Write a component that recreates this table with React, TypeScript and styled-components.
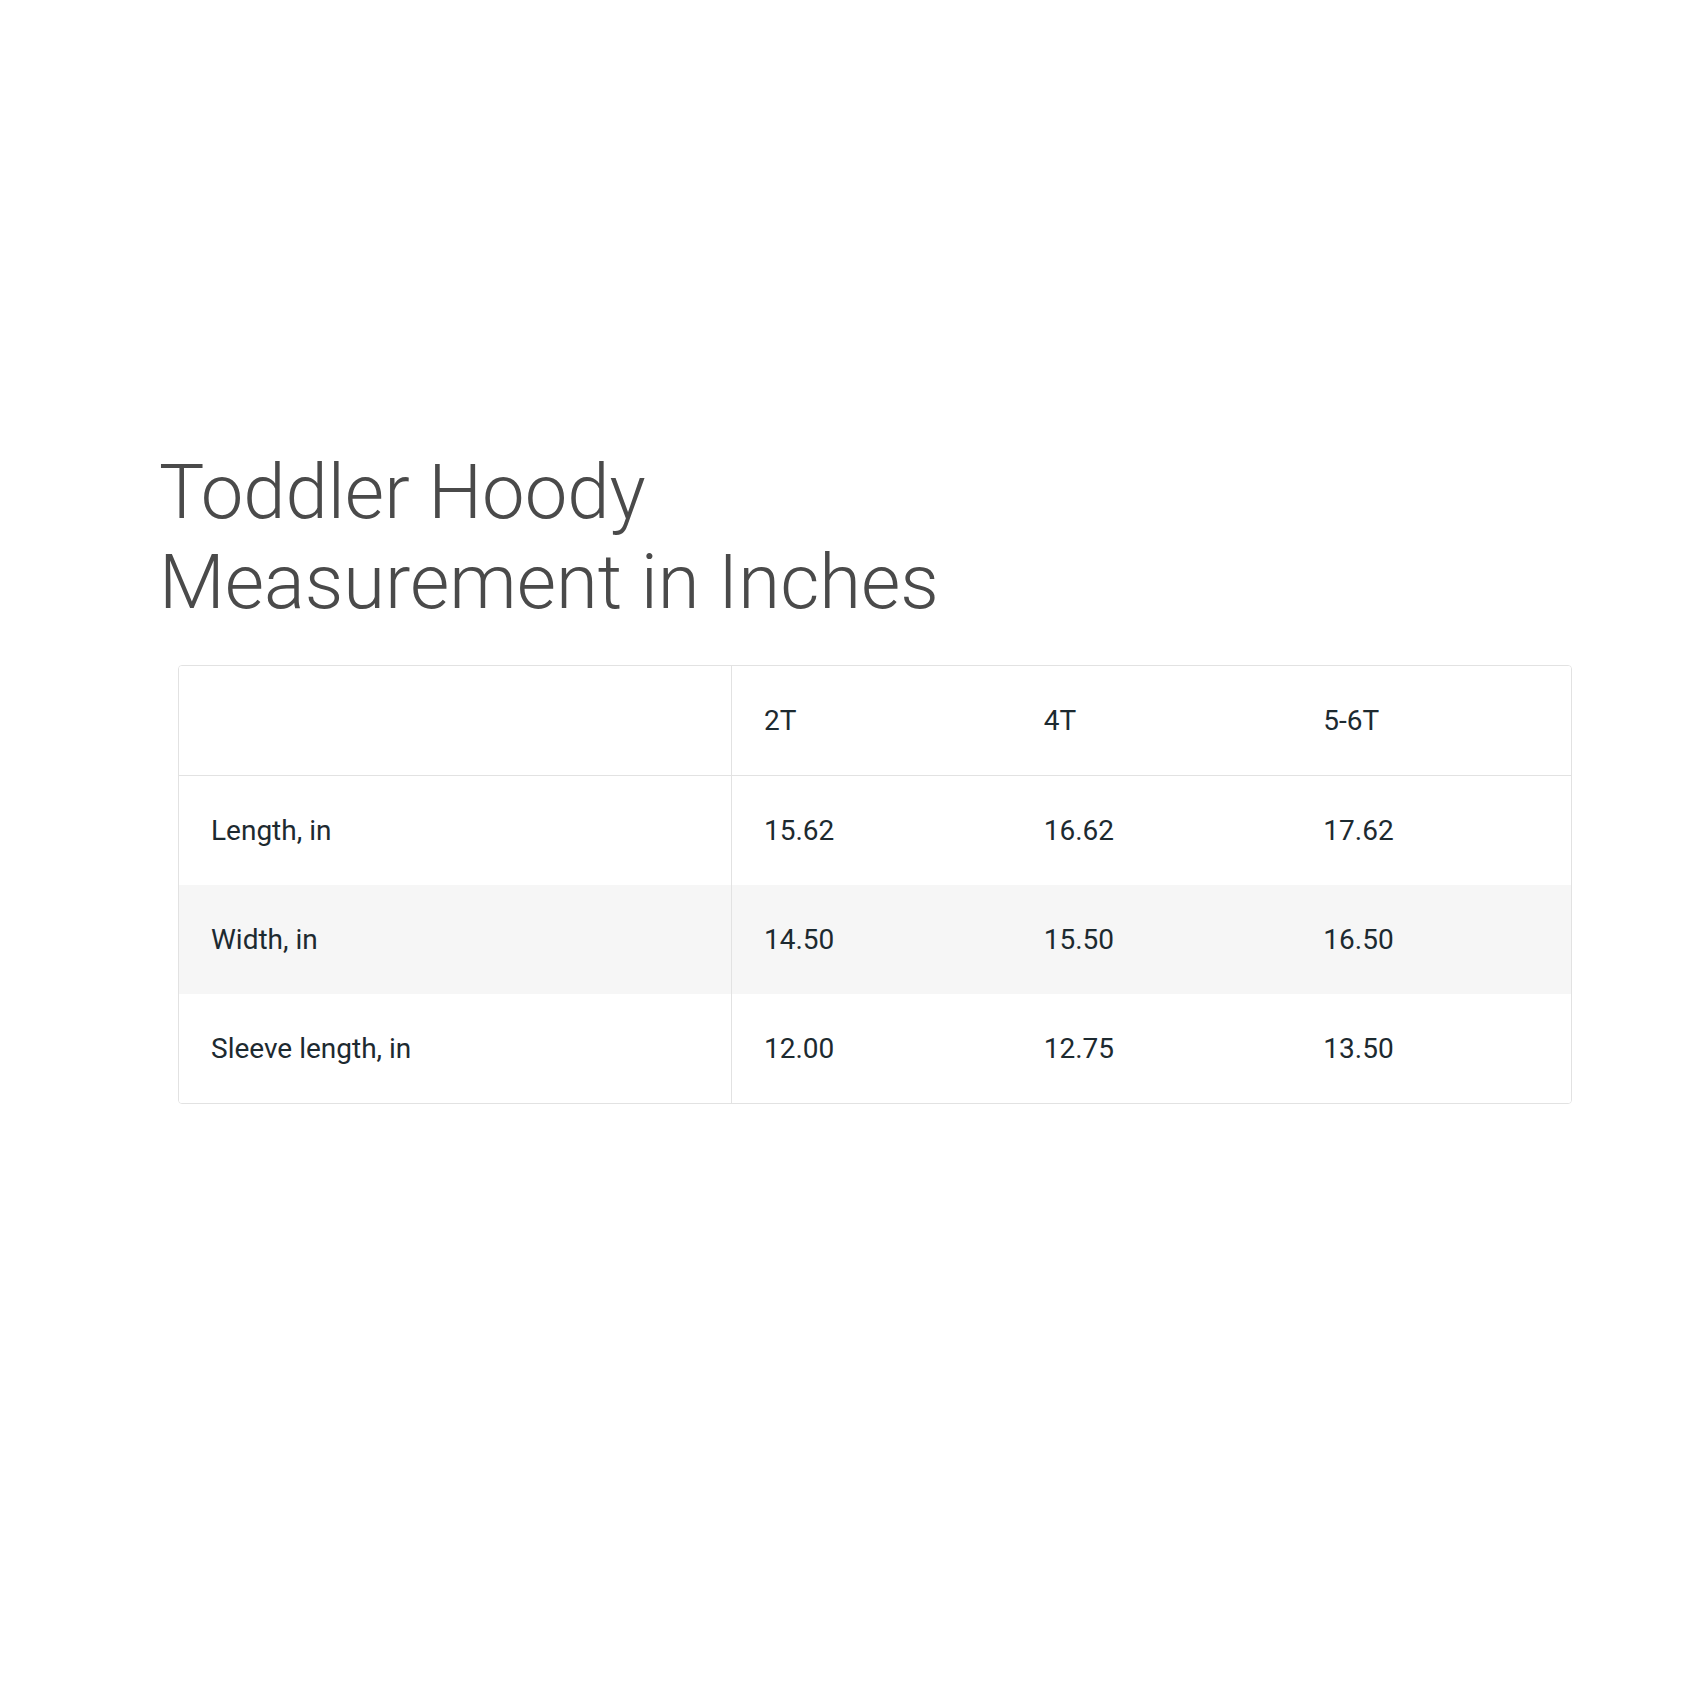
import styled, { createGlobalStyle } from 'styled-components'

const GlobalStyle = createGlobalStyle`
  html, body {
    margin: 0;
    padding: 0;
    background: #ffffff;
  }
  body {
    font-family: Roboto, "Liberation Sans", sans-serif;
  }
`

const Page = styled.div`
  width: 1700px;
  height: 1700px;
  box-sizing: border-box;
  padding: 447px 128px 0 159px;
`

const Title = styled.h1`
  margin: 0;
  font-family: Roboto, "Liberation Sans", sans-serif;
  font-weight: 300;
  font-size: 76px;
  line-height: 90px;
  color: #4a4a4a;
`

const Table = styled.div`
  margin: 38px 0 0 19px;
  width: 1394px;
  box-sizing: border-box;
  border: 1px solid #e2e2e2;
  border-radius: 4px;
  overflow: hidden;
`

const Row = styled.div<{ $shaded?: boolean; $head?: boolean }>`
  display: grid;
  grid-template-columns: 553px 1fr 1fr 1fr;
  height: ${p => (p.$head ? '110px' : '109px')};
  background: ${p => (p.$shaded ? '#f6f6f6' : '#ffffff')};
  border-bottom: ${p => (p.$head ? '1px solid #e2e2e2' : 'none')};
  box-sizing: border-box;
`

const Cell = styled.div<{ $label?: boolean }>`
  display: flex;
  align-items: center;
  padding: 0 32px;
  box-sizing: border-box;
  font-size: 28px;
  color: #1d2a30;
  border-right: ${p => (p.$label ? '1px solid #e2e2e2' : 'none')};
`

const sizes = ['2T', '4T', '5-6T']

const rows = [
  { label: 'Length, in', values: ['15.62', '16.62', '17.62'] },
  { label: 'Width, in', values: ['14.50', '15.50', '16.50'] },
  { label: 'Sleeve length, in', values: ['12.00', '12.75', '13.50'] },
]

export default function App() {
  return (
    <>
      <GlobalStyle />
      <Page>
        <Title>
          Toddler Hoody
          <br />
          Measurement in Inches
        </Title>
        <Table>
          <Row $head>
            <Cell $label />
            {sizes.map(s => (
              <Cell key={s}>{s}</Cell>
            ))}
          </Row>
          {rows.map((r, i) => (
            <Row key={r.label} $shaded={i === 1}>
              <Cell $label>{r.label}</Cell>
              {r.values.map(v => (
                <Cell key={v}>{v}</Cell>
              ))}
            </Row>
          ))}
        </Table>
      </Page>
    </>
  )
}
